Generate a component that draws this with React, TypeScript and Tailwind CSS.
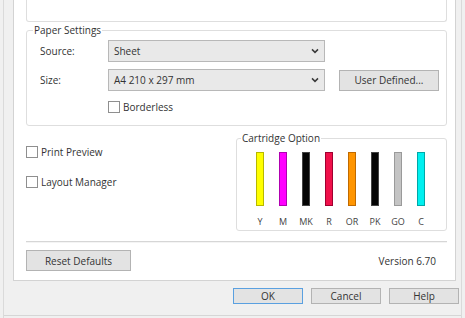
import React from 'react';

const inks = [
  { code: 'Y', color: 'bg-[#ffff00]', edge: 'border-[#b8b800]' },
  { code: 'M', color: 'bg-[#ff00ff]', edge: 'border-[#b000b0]' },
  { code: 'MK', color: 'bg-[#050505]', edge: 'border-[#444444]' },
  { code: 'R', color: 'bg-[#f0104a]', edge: 'border-[#a00030]' },
  { code: 'OR', color: 'bg-[#ff9500]', edge: 'border-[#c06a00]' },
  { code: 'PK', color: 'bg-[#050505]', edge: 'border-[#444444]' },
  { code: 'GO', color: 'bg-[#c4c4c4]', edge: 'border-[#9a9a9a]' },
  { code: 'C', color: 'bg-[#00f0f0]', edge: 'border-[#00a8a8]' },
];

function Chevron() {
  return (
    <svg width="8" height="6" viewBox="0 0 8 6" className="text-[#3a3a3a]">
      <path d="M1 1.4 L4 4.4 L7 1.4" fill="none" stroke="currentColor" strokeWidth="1.5" />
    </svg>
  );
}

function Select({ value }: { value: string }) {
  return (
    <div className="w-[217px] h-[22px] flex items-center justify-between pl-[5px] pr-[5px] bg-[#e9e9e9] border border-[#b8b8b8]">
      <span>{value}</span>
      <Chevron />
    </div>
  );
}

function Check({ label }: { label: string }) {
  return (
    <div className="flex items-center gap-[3px]">
      <div className="w-[12px] h-[12px] bg-white border border-[#8f8f8f]" />
      <span>{label}</span>
    </div>
  );
}

function Button({ label, width, primary }: { label: string; width: string; primary?: boolean }) {
  return (
    <div
      className={`${width} flex items-center justify-center bg-[#e3e3e3] border ${
        primary ? 'border-[#5aa0e0]' : 'border-[#b3b3b3]'
      }`}
    >
      {label}
    </div>
  );
}

export default function App() {
  return (
    <div className="w-[465px] h-[318px] bg-[#f0f0f0] flex flex-col overflow-hidden font-['Open_Sans',sans-serif] text-[10px] leading-none text-[#333333]">
      <div className="mx-[3px] h-[318px] border-x border-[#dadada] flex flex-col">
        {/* tab page */}
        <div className="ml-[9px] w-[443px] h-[281px] shrink-0 bg-white border-x border-b border-[#d3d3d3] pl-[12px] pr-[8px] flex flex-col">
          <div className="h-[22px] shrink-0 border-x border-b border-[#dedede] rounded-b-[3px]" />

          {/* Paper Settings */}
          <div className="relative mt-[8px] h-[96px] shrink-0 border border-[#dedede] rounded-[3px] pl-[13px] pt-[9px] flex flex-col">
            <span className="absolute left-[6px] top-[-6px] px-[1px] bg-white">Paper Settings</span>
            <div className="flex items-center">
              <span className="w-[68px]">Source:</span>
              <Select value="Sheet" />
            </div>
            <div className="flex items-center mt-[7px]">
              <span className="w-[68px]">Size:</span>
              <Select value="A4 210 x 297 mm" />
              <Button label="User Defined..." width="w-[100px] h-[21px] ml-[14px]" />
            </div>
            <div className="ml-[68px] mt-[10px]">
              <Check label="Borderless" />
            </div>
          </div>

          {/* options + cartridge */}
          <div className="flex justify-between mt-[12px]">
            <div className="flex flex-col gap-[18px] pt-[8px]">
              <Check label="Print Preview" />
              <Check label="Layout Manager" />
            </div>
            <div className="relative w-[211px] h-[93px] border border-[#dedede] rounded-[3px] pt-[13px] pl-[19px]">
              <span className="absolute left-[4px] top-[-6px] px-[1px] bg-white">Cartridge Option</span>
              <div className="flex gap-[15px]">
                {inks.map((ink) => (
                  <div key={ink.code} className="w-[8px] flex flex-col items-center">
                    <div className={`w-[8px] h-[54px] border ${ink.color} ${ink.edge}`} />
                    <span className="mt-[11px] text-[9px] text-[#444]">{ink.code}</span>
                  </div>
                ))}
              </div>
            </div>
          </div>

          <div className="mt-[10px] h-[2px] shrink-0 border-t border-[#d6d6d6] bg-[#f4f4f4]" />

          <div className="mt-[7px] flex items-center justify-between pr-[11px]">
            <Button label="Reset Defaults" width="w-[105px] h-[21px]" />
            <span>Version 6.70</span>
          </div>
        </div>

        {/* dialog buttons */}
        <div className="flex justify-end gap-[8px] pr-[2px] mt-[7px]">
          <Button label="OK" width="w-[70px] h-[16px]" primary />
          <Button label="Cancel" width="w-[70px] h-[16px]" />
          <Button label="Help" width="w-[70px] h-[16px]" />
        </div>
        <div className="mt-[11px] border-t border-[#d6d6d6]" />
      </div>
    </div>
  );
}
